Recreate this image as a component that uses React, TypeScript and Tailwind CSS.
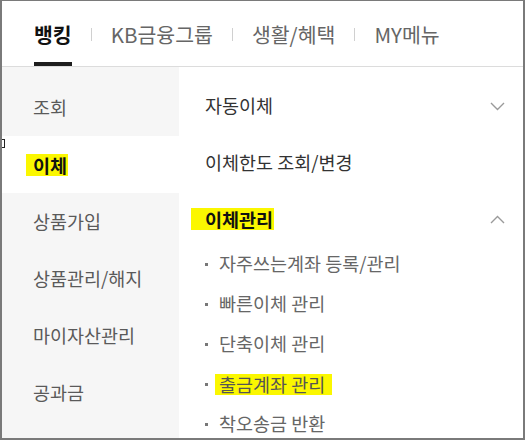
import React from "react";

const Chevron = ({ up }: { up?: boolean }) => (
  <svg width="15" height="9" viewBox="0 0 15 9" className="shrink-0">
    <path
      d={up ? "M1 8 L7.5 1.5 L14 8" : "M1 1 L7.5 7.5 L14 1"}
      fill="none"
      stroke="#9a9a9a"
      strokeWidth="1.4"
    />
  </svg>
);

const leftItems = ["조회", "이체", "상품가입", "상품관리/해지", "마이자산관리", "공과금"];
const subItems = ["자주쓰는계좌 등록/관리", "빠른이체 관리", "단축이체 관리", "출금계좌 관리", "착오송금 반환"];

export default function App() {
  return (
    <div className="relative w-[525px] h-[440px] overflow-hidden bg-white border-t border-x-2 border-b-2 border-[#7a7a7a] font-['Noto_Sans_CJK_KR','Noto_Sans',sans-serif]">
      <div className="absolute left-[-2px] top-[138px] w-[5px] h-[9px] border border-[#222] bg-white" />
      {/* top nav */}
      <div className="h-[66px] border-b border-[#dcdcdc] flex items-stretch pl-[32px] gap-[19px] text-[20.5px] text-[#666]">
        <div className="pt-[5px] border-b-4 border-[#1e1e1e] flex items-center font-bold text-[#111] leading-none">
          뱅킹
        </div>
        <div className="pt-[5px] pb-[4px] flex items-center">
          <div className="w-px h-[13px] bg-[#d0d0d0]" />
        </div>
        <div className="pt-[5px] pb-[4px] flex items-center leading-none">KB금융그룹</div>
        <div className="pt-[5px] pb-[4px] flex items-center">
          <div className="w-px h-[13px] bg-[#d0d0d0]" />
        </div>
        <div className="pt-[5px] pb-[4px] flex items-center leading-none">생활/혜택</div>
        <div className="pt-[5px] pb-[4px] flex items-center">
          <div className="w-px h-[13px] bg-[#d0d0d0]" />
        </div>
        <div className="pt-[5px] pb-[4px] flex items-center leading-none">MY메뉴</div>
      </div>

      <div className="flex h-[372px]">
        {/* left column */}
        <div className="w-[177px] bg-[#f6f6f6] pt-[12px] text-[18.5px] text-[#5a5a5a]">
          {leftItems.map((t) =>
            t === "이체" ? (
              <div key={t} className="h-[57px] flex items-center pl-[31px] bg-white">
                <span className="ml-[-7px] pl-[7px] pr-[1px] leading-[22px] bg-[#fbf700] font-bold text-[#111]">
                  {t}
                </span>
              </div>
            ) : (
              <div key={t} className="h-[57px] flex items-center pl-[31px]">
                {t}
              </div>
            )
          )}
        </div>

        {/* right column */}
        <div className="flex-1 pl-[26px] pr-[18px] pt-[11px] text-[18.5px]">
          <div className="h-[56px] flex items-center justify-between text-[#333]">
            <span>자동이체</span>
            <Chevron />
          </div>
          <div className="h-[57px] flex items-center text-[#333]">이체한도 조회/변경</div>
          <div className="h-[56px] flex items-center justify-between">
            <span className="ml-[-14px] pl-[14px] pr-[1px] leading-[22px] bg-[#fbf700] font-bold text-[#111]">
              이체관리
            </span>
            <Chevron up />
          </div>
          <div className="mt-[-3px] text-[#666]">
            {subItems.map((t) => (
              <div key={t} className="h-[40px] flex items-center">
                <div className="w-[3px] h-[3px] bg-[#777] mr-[11px]" />
                {t === "출금계좌 관리" ? (
                  <span className="ml-[-4px] pl-[4px] pr-[7px] leading-[21px] bg-[#fbf700] text-[#555]">
                    {t}
                  </span>
                ) : (
                  <span>{t}</span>
                )}
              </div>
            ))}
          </div>
        </div>
      </div>
    </div>
  );
}
